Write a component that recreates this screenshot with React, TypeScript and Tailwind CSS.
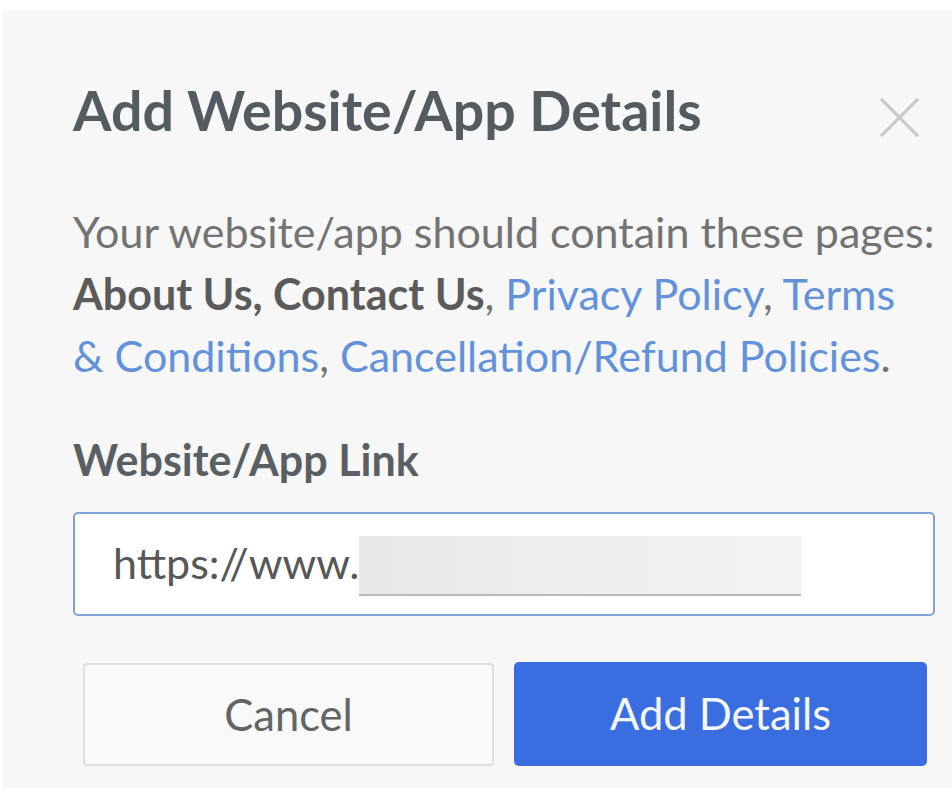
export default function App() {
    return (
        <div className="min-h-screen bg-white pt-[10px] pl-[3px] font-['Lato','Noto_Sans',sans-serif]">
            <div className="bg-[#f7f7f7] h-[778px] pl-[70px] pr-[17px] pt-[67px]">
                <div className="flex items-start justify-between">
                    <h1 className="text-[55.5px] leading-[66px] font-bold text-[#545b61]">
                        Add Website/App Details
                    </h1>
                    <button className="mt-[20px] mr-[15px] text-[#c9c9c9]" aria-label="close">
                        <svg width="41" height="41" viewBox="0 0 42 42" fill="none" stroke="currentColor" strokeWidth="3.2">
                            <path d="M2 2 L40 40 M40 2 L2 40" />
                        </svg>
                    </button>
                </div>

                <p className="mt-[58px] text-[43px] leading-[62px] text-[#737373]">
                    Your website/app should contain these pages:
                    <br />
                    <span className="font-bold text-[#5b5b5b]">About Us, Contact Us</span>,{" "}
                    <a className="text-[#6292dc]">Privacy Policy</a>,{" "}
                    <a className="text-[#6292dc]">Terms</a>
                    <br />
                    <a className="text-[#6292dc]">&amp; Conditions</a>,{" "}
                    <a className="text-[#6292dc]">Cancellation/Refund Policies</a>.
                </p>

                <label className="block mt-[48px] text-[43px] leading-[50px] font-bold text-[#5a5f64]">
                    Website/App Link
                </label>
                <div className="mt-[27px] w-[862px] h-[104px] flex items-center bg-white border-2 border-[#7fa2d8] rounded-[5px] pl-[38px] pb-[3px]">
                    <span className="text-[43px] leading-[50px] text-[#575757]">https://www.</span>
                    <span className="inline-block w-[442px] h-[60px] mt-[6px] bg-gradient-to-r from-[#e7e7e7] via-[#efefef] to-[#f2f2f2] border-b-2 border-[#b9b9b9]" />
                </div>

                <div className="mt-[47px] ml-[10px] flex gap-[20px]">
                    <button className="w-[411px] h-[103px] bg-[#f9f9f9] border-2 border-[#dedede] rounded-[4px] text-[43.5px] text-[#646464]">
                        Cancel
                    </button>
                    <button className="w-[413px] h-[104px] -mt-px bg-[#3a6ee0] rounded-[5px] text-[43.5px] text-[#f4f7ff]">
                        Add Details
                    </button>
                </div>
            </div>
        </div>
    );
}
